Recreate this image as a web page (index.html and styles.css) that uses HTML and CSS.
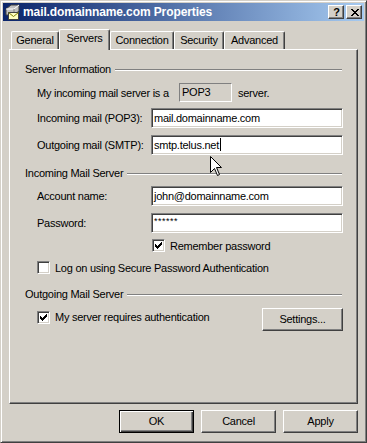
FILE: index.html
```html
<!DOCTYPE html>
<html lang="en">
<head>
  <meta charset="UTF-8" />
  <meta name="viewport" content="width=device-width, initial-scale=1.0"/>
  <title>mail.domainname.com Properties</title>
  <link rel="stylesheet" href="styles.css">
</head>
<body>
  <div class="window">
    <div class="titlebar">
      <svg class="title-icon" width="16" height="16" viewBox="0 0 16 16">
        <path d="M1 5 L6 1 L14 1 L14 7 L9 11 L1 11 Z" fill="#c0c0c0" stroke="#404040" stroke-width="1"/>
        <path d="M1 5 L9 5 L14 1" fill="none" stroke="#ffffff" stroke-width="1"/>
        <path d="M9 5 L9 11" stroke="#808080" stroke-width="1"/>
        <rect x="3.5" y="8.5" width="10" height="7" fill="#ffffc0" stroke="#404040"/>
        <path d="M3.5 8.5 L8.5 12.5 L13.5 8.5" fill="none" stroke="#808000"/>
      </svg>
      <span class="title-text">mail.domainname.com Properties</span>
      <div class="caption-buttons">
        <div class="cap-btn help">?</div>
        <div class="cap-btn close">
          <svg width="8" height="7" viewBox="0 0 8 7" shape-rendering="crispEdges">
            <path d="M0 0h2v1h-2z M6 0h2v1h-2z M1 1h2v1h-2z M5 1h2v1h-2z M2 2h4v1h-4z M3 3h2v1h-2z M2 4h4v1h-4z M1 5h2v1h-2z M5 5h2v1h-2z M0 6h2v1h-2z M6 6h2v1h-2z" fill="#000"/>
          </svg>
        </div>
      </div>
    </div>

    <div class="dialog">
      <div class="tabs">
        <div class="tab w-general">General</div>
        <div class="tab active w-servers">Servers</div>
        <div class="tab w-connection">Connection</div>
        <div class="tab w-security">Security</div>
        <div class="tab w-advanced">Advanced</div>
      </div>

      <div class="panel">
        <div class="group">
          <div class="group-head"><span>Server Information</span><i class="etch"></i></div>
          <div class="rows">
            <div class="row row-type">
              <span class="type-label">My incoming mail server is a</span>
              <span class="static-box">POP3</span>
              <span class="type-after">server.</span>
            </div>
            <div class="row field gap-6">
              <span class="field-label">Incoming mail (POP3):</span>
              <div class="edit">mail.domainname.com</div>
            </div>
            <div class="row field gap-7">
              <span class="field-label">Outgoing mail (SMTP):</span>
              <div class="edit">smtp.telus.net<span class="caret"></span></div>
            </div>
          </div>
        </div>

        <div class="group group-2">
          <div class="group-head"><span>Incoming Mail Server</span><i class="etch"></i></div>
          <div class="rows">
            <div class="row field gap-6">
              <span class="field-label">Account name:</span>
              <div class="edit">john@domainname.com</div>
            </div>
            <div class="row field gap-7">
              <span class="field-label">Password:</span>
              <div class="edit secret">******</div>
            </div>
            <div class="row checkrow indent gap-6">
              <span class="check on">
                <svg width="11" height="11" viewBox="1 1 11 11" shape-rendering="crispEdges"><path d="M3 5h1v3h-1z M4 6h1v3h-1z M5 7h1v3h-1z M6 6h1v3h-1z M7 5h1v3h-1z M8 4h1v3h-1z M9 3h1v3h-1z" fill="#000"/></svg>
              </span>
              <span>Remember password</span>
            </div>
            <div class="row checkrow gap-9">
              <span class="check"></span>
              <span>Log on using Secure Password Authentication</span>
            </div>
          </div>
        </div>

        <div class="group group-3">
          <div class="group-head"><span>Outgoing Mail Server</span><i class="etch"></i></div>
          <div class="rows">
            <div class="row auth gap-7">
              <span class="check on">
                <svg width="11" height="11" viewBox="1 1 11 11" shape-rendering="crispEdges"><path d="M3 5h1v3h-1z M4 6h1v3h-1z M5 7h1v3h-1z M6 6h1v3h-1z M7 5h1v3h-1z M8 4h1v3h-1z M9 3h1v3h-1z" fill="#000"/></svg>
              </span>
              <span class="auth-text">My server requires authentication</span>
              <div class="btn settings">Settings...</div>
            </div>
          </div>
        </div>
      </div>

      <div class="actions">
        <div class="btn default">OK</div>
        <div class="btn">Cancel</div>
        <div class="btn">Apply</div>
      </div>
    </div>

    <svg class="pointer" width="13" height="21" viewBox="0 0 13 21">
      <path d="M0.5 0.5 V16.5 L4.5 12.5 L7.5 19.5 L9.5 18.5 L6.5 11.5 H11.5 Z" fill="#fff" stroke="#000" stroke-width="1"/>
    </svg>
  </div>
</body>
</html>
```

FILE: styles.css
```css
body {
  margin: 0;
  font-family: 'Liberation Sans', Arial, sans-serif;
  font-size: 11px;
  letter-spacing: -0.25px;
  color: #000;
  background: #d4d0c8;
}

.window {
  position: relative;
  width: 367px;
  height: 443px;
  box-sizing: border-box;
  padding: 2px;
  background: #d4d0c8;
  border: 1px solid;
  border-color: #d4d0c8 #404040 #404040 #d4d0c8;
  box-shadow: inset 1px 1px #fff, inset -1px -1px #808080;
  overflow: hidden;
}

/* title bar */

.titlebar {
  height: 18px;
  display: flex;
  align-items: center;
  padding: 0 2px;
  background: linear-gradient(to right, #0a246a, #a6caf0);
}

.title-icon {
  flex: none;
}

.title-text {
  margin-left: 2px;
  color: #fff;
  font-weight: bold;
  font-size: 12px;
  letter-spacing: -0.1px;
  white-space: nowrap;
}

.caption-buttons {
  margin-left: auto;
  display: flex;
  gap: 2px;
}

.cap-btn {
  width: 16px;
  height: 14px;
  box-sizing: border-box;
  background: #d4d0c8;
  border: 1px solid;
  border-color: #fff #404040 #404040 #fff;
  box-shadow: inset -1px -1px #808080;
  display: flex;
  align-items: center;
  justify-content: center;
}

.help {
  font-weight: bold;
  font-size: 11px;
  line-height: 12px;
  padding-left: 1px;
}

.close svg {
  margin-left: 1px;
}

/* dialog body */

.dialog {
  padding: 8px 6px 0 6px;
}

.tabs {
  display: flex;
  align-items: flex-end;
  height: 20px;
  padding-left: 2px;
}

.tab {
  box-sizing: border-box;
  height: 18px;
  line-height: 17px;
  text-align: center;
  background: #d4d0c8;
  border-top: 1px solid #fff;
  border-left: 1px solid #fff;
  border-right: 1px solid #404040;
  border-radius: 2px 2px 0 0;
  box-shadow: inset -1px 0 #808080;
  white-space: nowrap;
}

.tab.active {
  position: relative;
  z-index: 1;
  height: 21px;
  margin-bottom: -1px;
  padding-bottom: 3px;
}

.w-general { width: 48px; }
.w-servers { width: 51px; }
.w-connection { width: 64px; }
.w-security { width: 50px; }
.w-advanced { width: 61px; }

.panel {
  box-sizing: border-box;
  height: 355px;
  padding: 13px 15px 0 15px;
  border: 1px solid;
  border-color: #fff #404040 #404040 #fff;
  box-shadow: inset -1px -1px #808080;
}

.group-2 {
  margin-top: 12px;
}

.group-3 {
  margin-top: 14px;
}

.group-head {
  display: flex;
  align-items: center;
  height: 13px;
  line-height: 13px;
  white-space: nowrap;
}

.etch {
  flex: 1;
  margin-left: 4px;
  border-top: 1px solid #808080;
  border-bottom: 1px solid #fff;
}

.rows {
  padding-left: 12px;
  margin-right: -1px;
}

.row {
  display: flex;
  align-items: center;
  white-space: nowrap;
}

.gap-6 { margin-top: 6px; }
.gap-7 { margin-top: 7px; }
.gap-9 { margin-top: 9px; }

.row-type {
  margin-top: 7px;
  height: 19px;
}

.type-label {
  width: 142px;
}

.static-box {
  box-sizing: border-box;
  width: 53px;
  height: 19px;
  line-height: 17px;
  padding-left: 2px;
  border: 1px solid;
  border-color: #808080 #fff #fff #808080;
}

.type-after {
  margin-left: 6px;
}

.field {
  height: 20px;
}

.field-label {
  width: 114px;
  flex: none;
}

.edit {
  box-sizing: border-box;
  width: 192px;
  height: 20px;
  line-height: 18px;
  padding-left: 2px;
  background: #fff;
  border: 1px solid;
  border-color: #808080 #fff #fff #808080;
  box-shadow: inset 1px 1px #404040, inset -1px -1px #d4d0c8;
}

.caret {
  display: inline-block;
  width: 1px;
  height: 13px;
  margin-left: 1px;
  background: #000;
  vertical-align: -2px;
}

.secret {
  font-size: 9px;
  line-height: 14px;
  letter-spacing: 0.5px;
}

.checkrow {
  height: 13px;
  gap: 5px;
}

.indent {
  padding-left: 115px;
}

.check {
  flex: none;
  width: 13px;
  height: 13px;
  box-sizing: border-box;
  background: #fff;
  border: 1px solid;
  border-color: #808080 #fff #fff #808080;
  box-shadow: inset 1px 1px #404040, inset -1px -1px #d4d0c8;
}

.check svg {
  display: block;
}

.auth {
  height: 23px;
  align-items: flex-start;
}

.auth .check {
  margin-top: 3px;
}

.auth-text {
  margin-left: 5px;
  line-height: 13px;
  margin-top: 3px;
}

/* buttons */

.btn {
  box-sizing: border-box;
  width: 75px;
  height: 23px;
  line-height: 21px;
  text-align: center;
  background: #d4d0c8;
  border: 1px solid;
  border-color: #fff #404040 #404040 #fff;
  box-shadow: inset -1px -1px #808080;
}

.btn.default {
  border-color: #000;
  line-height: 21px;
  box-shadow: inset 1px 1px #fff, inset -1px -1px #404040, inset -2px -2px #808080;
}

.settings {
  width: 81px;
  margin-left: auto;
}

.actions {
  display: flex;
  justify-content: flex-end;
  gap: 7px;
  margin-top: 6px;
}

.pointer {
  position: absolute;
  left: 209px;
  top: 155px;
}
```
